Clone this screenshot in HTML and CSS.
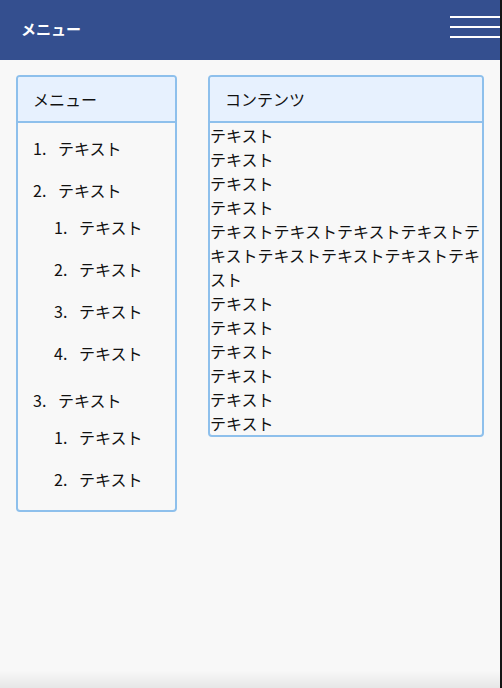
FILE: index.html
```html
<!DOCTYPE html>
<html lang="ja">
<head>
<meta charset="utf-8">
<title>メニュー</title>
<link rel="stylesheet" href="styles.css">
</head>
<body>
<header class="topbar">
  <h1 class="topbar-title">メニュー</h1>
  <button class="hamburger" aria-label="menu">
    <span class="hamburger-line"></span>
    <span class="hamburger-line"></span>
    <span class="hamburger-line"></span>
  </button>
</header>
<main class="layout">
  <nav class="panel panel-menu">
    <div class="panel-head">メニュー</div>
    <ol class="menu-list">
      <li class="menu-item">テキスト</li>
      <li class="menu-item">テキスト
        <ol class="menu-list sub">
          <li class="menu-item">テキスト</li>
          <li class="menu-item">テキスト</li>
          <li class="menu-item">テキスト</li>
          <li class="menu-item">テキスト</li>
        </ol>
      </li>
      <li class="menu-item">テキスト
        <ol class="menu-list sub">
          <li class="menu-item">テキスト</li>
          <li class="menu-item">テキスト</li>
        </ol>
      </li>
    </ol>
  </nav>
  <section class="panel panel-content">
    <div class="panel-head">コンテンツ</div>
    <div class="content-body">
      <p class="line">テキスト</p>
      <p class="line">テキスト</p>
      <p class="line">テキスト</p>
      <p class="line">テキスト</p>
      <p class="line">テキストテキストテキストテキストテキストテキストテキストテキストテキスト</p>
      <p class="line">テキスト</p>
      <p class="line">テキスト</p>
      <p class="line">テキスト</p>
      <p class="line">テキスト</p>
      <p class="line">テキスト</p>
      <p class="line">テキスト</p>
    </div>
  </section>
</main>
</body>
</html>
```

FILE: styles.css
```css
html {
  background: #141414;
}
body {
  margin: 0 2px 0 0;
  min-height: 688px;
  background: #f8f8f8 linear-gradient(to bottom, rgba(0,0,0,0) 670px, rgba(0,0,0,0.07) 688px) no-repeat;
  font-family: "Noto Sans CJK JP", "Noto Sans", sans-serif;
  font-size: 16px;
  line-height: 24px;
  color: #111;
}
.topbar {
  height: 60px;
  background: #344f8f;
  display: flex;
  align-items: center;
  justify-content: space-between;
  padding-left: 21px;
}
.topbar-title {
  margin: 0;
  font-size: 15px;
  font-weight: bold;
  color: #fff;
  line-height: 24px;
  position: relative;
  top: -1px;
}
.hamburger {
  width: 50px;
  height: 22px;
  padding: 0;
  margin: 0;
  border: 0;
  background: none;
  display: flex;
  flex-direction: column;
  justify-content: space-between;
  margin-top: -6px;
}
.hamburger-line {
  display: block;
  height: 2px;
  width: 50px;
  background: #fff;
}
.layout {
  display: flex;
  align-items: flex-start;
  gap: 31px;
  padding: 15px 16px;
}
.panel {
  border: 2px solid #8ec0ec;
  border-radius: 4px;
  overflow: hidden;
}
.panel-menu {
  width: 157px;
  flex: none;
}
.panel-content {
  width: 272px;
  flex: none;
}
.panel-head {
  background: #e7f1fe;
  padding: 10px 15px;
  border-bottom: 2px solid #8ec0ec;
  line-height: 24px;
}
.menu-list {
  list-style: none;
  margin: 0;
  padding: 0 0 9px 15px;
  counter-reset: item;
}
.menu-list.sub {
  padding: 0 0 0 21px;
}
.menu-item {
  counter-increment: item;
  padding: 13px 0 5px;
}
.menu-item::before {
  content: counter(item) ".";
  display: inline-block;
  width: 25px;
}
.content-body {
  padding: 0;
}
.line {
  margin: 0;
  line-height: 24px;
}
```
